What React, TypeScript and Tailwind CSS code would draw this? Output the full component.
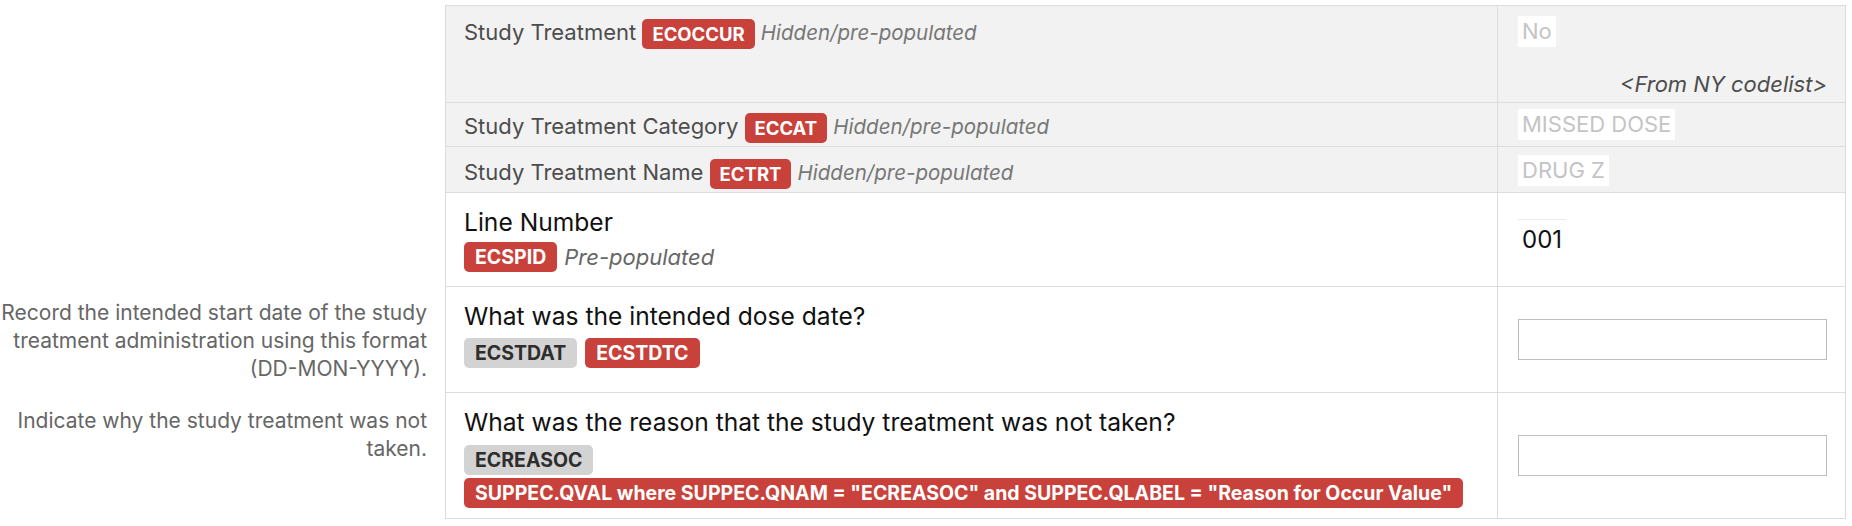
import clsx from "clsx";

function Badge({ children, gray }: { children: React.ReactNode; gray?: boolean }) {
  return (
    <span
      className={clsx(
        "inline-block rounded-[5px] px-[11px] py-[4px] align-middle text-[19.5px] font-bold leading-[22px] not-italic",
        gray ? "bg-[#d3d3d3] text-[#2e2e2e]" : "bg-[#c8423b] text-white"
      )}
    >
      {children}
    </span>
  );
}

function SmallBadge({ children }: { children: React.ReactNode }) {
  return (
    <span className="inline-block rounded-[5px] bg-[#c8423b] px-[10px] py-[4px] align-middle text-[18.5px] font-bold leading-[22px] text-white">
      {children}
    </span>
  );
}

function Hidden({ children }: { children: React.ReactNode }) {
  return <span className="text-[20.5px] italic text-[#777]">{children}</span>;
}

function ReadonlyValue({ children }: { children: React.ReactNode }) {
  return (
    <span className="inline-block bg-white px-[4px] text-[22px] leading-[31px] text-[#c4c4c4]">{children}</span>
  );
}

export default function App() {
  return (
    <div className="min-h-screen bg-white pt-[5px] font-['Inter','Noto_Sans',sans-serif]">
      {/* hidden rows */}
      <div className="flex h-[98px]">
        <div className="w-[445px] shrink-0" />
        <div className="w-[1052px] shrink-0 border-y border-l border-[#dcdcdc] bg-[#f2f2f2] px-[18px] pt-[10px] text-[22px] leading-[32px] text-[#4d4d4d]">
          Study Treatment <SmallBadge>ECOCCUR</SmallBadge> <Hidden>Hidden/pre-populated</Hidden>
        </div>
        <div className="flex w-[349px] shrink-0 flex-col justify-between border-x border-y border-[#dcdcdc] bg-[#f2f2f2] pb-[3px] pl-[20px] pr-[18px] pt-[10px]">
          <div>
            <ReadonlyValue>No</ReadonlyValue>
          </div>
          <div className="text-right text-[22px] italic leading-[30px] text-[#4d4d4d]">&lt;From NY codelist&gt;</div>
        </div>
      </div>

      <div className="flex h-[44px]">
        <div className="w-[445px] shrink-0" />
        <div className="w-[1052px] shrink-0 border-b border-l border-[#dcdcdc] bg-[#f2f2f2] px-[18px] pt-[7px] text-[22px] leading-[32px] text-[#4d4d4d]">
          Study Treatment Category <SmallBadge>ECCAT</SmallBadge> <Hidden>Hidden/pre-populated</Hidden>
        </div>
        <div className="w-[349px] shrink-0 border-x border-b border-[#dcdcdc] bg-[#f2f2f2] pl-[20px] pt-[6px]">
          <ReadonlyValue>MISSED DOSE</ReadonlyValue>
        </div>
      </div>

      <div className="flex h-[46px]">
        <div className="w-[445px] shrink-0" />
        <div className="w-[1052px] shrink-0 border-b border-l border-[#dcdcdc] bg-[#f2f2f2] px-[18px] pt-[9px] text-[22px] leading-[32px] text-[#4d4d4d]">
          Study Treatment Name <SmallBadge>ECTRT</SmallBadge> <Hidden>Hidden/pre-populated</Hidden>
        </div>
        <div className="w-[349px] shrink-0 border-x border-b border-[#dcdcdc] bg-[#f2f2f2] pl-[20px] pt-[8px]">
          <ReadonlyValue>DRUG Z</ReadonlyValue>
        </div>
      </div>

      {/* Line number */}
      <div className="flex h-[94px]">
        <div className="w-[445px] shrink-0" />
        <div className="w-[1052px] shrink-0 border-b border-l border-[#dcdcdc] px-[18px] pt-[11px]">
          <div className="text-[24.6px] leading-[36px] text-[#111]">Line Number</div>
          <div className="mt-[2px] flex items-center gap-[7px]">
            <Badge>ECSPID</Badge>
            <span className="text-[22px] italic leading-[30px] text-[#666]">Pre-populated</span>
          </div>
        </div>
        <div className="flex w-[349px] shrink-0 items-center border-x border-b border-[#dcdcdc] pl-[20px]">
          <span className="border-t border-[#ececec] bg-white px-[4px] text-[24px] leading-[40px] text-[#111]">001</span>
        </div>
      </div>

      {/* intended dose date */}
      <div className="flex h-[106px]">
        <div className="w-[445px] shrink-0 pr-[18px] pt-[12px] text-right text-[21px] leading-[28px] text-[#666]">
          Record the intended start date of the study
          <br />
          treatment administration using this format
          <br />
          (DD-MON-YYYY).
        </div>
        <div className="w-[1052px] shrink-0 border-b border-l border-[#dcdcdc] px-[18px] pt-[11px]">
          <div className="text-[24.6px] leading-[36px] text-[#111]">What was the intended dose date?</div>
          <div className="mt-[4px] flex items-center gap-[8px]">
            <Badge gray>ECSTDAT</Badge>
            <Badge>ECSTDTC</Badge>
          </div>
        </div>
        <div className="flex w-[349px] shrink-0 items-center border-x border-b border-[#dcdcdc] pl-[20px] pr-[18px]">
          <input className="h-[41px] w-full border border-[#bdbdbd] bg-white" />
        </div>
      </div>

      {/* reason not taken */}
      <div className="flex h-[126px]">
        <div className="w-[445px] shrink-0 pr-[18px] pt-[14px] text-right text-[21px] leading-[28px] text-[#666]">
          Indicate why the study treatment was not
          <br />
          taken.
        </div>
        <div className="w-[1052px] shrink-0 border-b border-l border-[#dcdcdc] px-[18px] pt-[11px]">
          <div className="text-[24.6px] leading-[36px] text-[#111]">
            What was the reason that the study treatment was not taken?
          </div>
          <div className="mt-[5px]">
            <Badge gray>ECREASOC</Badge>
          </div>
          <div className="mt-[3px]">
            <Badge>SUPPEC.QVAL where SUPPEC.QNAM = "ECREASOC" and SUPPEC.QLABEL = "Reason for Occur Value"</Badge>
          </div>
        </div>
        <div className="flex w-[349px] shrink-0 items-center border-x border-b border-[#dcdcdc] pl-[20px] pr-[18px]">
          <input className="h-[41px] w-full border border-[#bdbdbd] bg-white" />
        </div>
      </div>
    </div>
  );
}
